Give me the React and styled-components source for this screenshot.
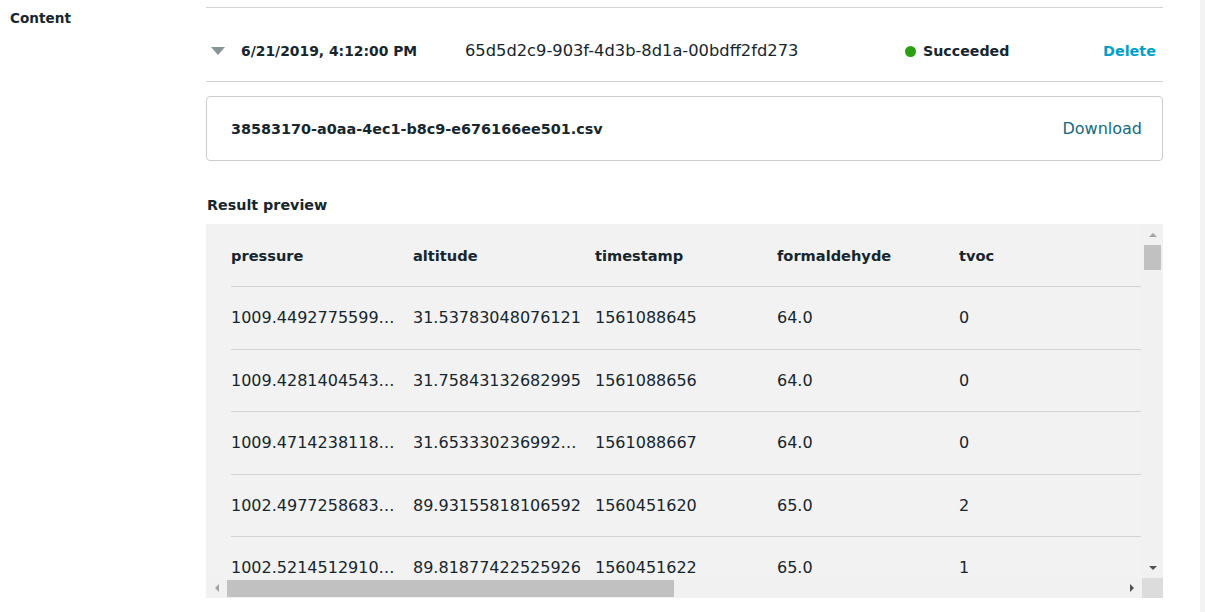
import React from 'react';
import styled, { createGlobalStyle } from 'styled-components';

//Constants we need for this page
const TEXT = '#16262e';
const LINE = '#d3d3d3';

const GlobalStyle = createGlobalStyle`
  html, body {
    margin: 0;
    padding: 0;
    background: #ffffff;
  }
  body {
    font-family: "DejaVu Sans", "Noto Sans", sans-serif;
    color: ${TEXT};
  }
`;

const Page = styled.div`
  width: 1205px;
  height: 612px;
  display: grid;
  grid-template-columns: 206px 957px 1fr 5px;
  overflow: hidden;
`;

const SideLabel = styled.div`
  padding: 9px 0 0 10px;
  font-size: 13.6px;
  font-weight: bold;
  line-height: 18px;
`;

const Main = styled.div`
  padding-top: 7px;
  display: flex;
  flex-direction: column;
`;

const PageEdge = styled.div`
  background: #f3f3f3;
`;

const JobRow = styled.div`
  display: grid;
  grid-template-columns: 35px 224px 440px 1fr auto;
  align-items: center;
  padding: 33px 7px 20px 0;
  border-top: 1px solid ${LINE};
  border-bottom: 1px solid ${LINE};
  line-height: 20px;
`;

const Caret = styled.span`
  width: 0;
  height: 0;
  margin-left: 5px;
  border-left: 7px solid transparent;
  border-right: 7px solid transparent;
  border-top: 8px solid #879596;
`;

const DateText = styled.span`
  font-size: 13.9px;
  font-weight: bold;
`;

const IdText = styled.span`
  font-size: 16.3px;
`;

const Status = styled.span`
  display: flex;
  align-items: center;
  gap: 7px;
  font-size: 14.2px;
  font-weight: bold;
`;

const Dot = styled.span`
  width: 11px;
  height: 11px;
  border-radius: 50%;
  background: #2a9f12;
`;

const DeleteLink = styled.a`
  font-size: 14.4px;
  font-weight: bold;
  color: #00a1c9;
  cursor: pointer;
`;

const FileCard = styled.div`
  box-sizing: border-box;
  height: 65px;
  margin-top: 14px;
  padding: 0 20px 0 24px;
  display: flex;
  align-items: center;
  justify-content: space-between;
  border: 1px solid #cccccc;
  border-radius: 4px;
`;

const FileName = styled.span`
  font-size: 14.4px;
  font-weight: bold;
`;

const DownloadLink = styled.a`
  font-size: 16px;
  color: #146a80;
  cursor: pointer;
`;

const SectionTitle = styled.h3`
  margin: 34px 0 9px 1px;
  font-size: 14.3px;
  font-weight: bold;
  line-height: 20px;
`;

const Preview = styled.div`
  height: 374px;
  display: grid;
  grid-template-columns: 1fr 21px;
  grid-template-rows: 1fr 20px;
  background: #f2f2f2;
`;

const Viewport = styled.div`
  overflow: hidden;
  min-width: 0;
  padding-left: 25px;
  margin-right: 1px;
`;

const Table = styled.table`
  border-collapse: collapse;
  table-layout: fixed;
  width: ${(p) => p.$width}px;
`;

const Th = styled.th`
  width: ${(p) => (p.$filler ? 'auto' : '182px')};
  height: 62px;
  padding: 0;
  text-align: left;
  font-size: 14.6px;
  font-weight: bold;
  border-bottom: 1px solid ${LINE};
`;

const Td = styled.td`
  height: 61.5px;
  padding: 0 12px 0 0;
  font-size: 16px;
  white-space: nowrap;
  overflow: hidden;
  text-overflow: ellipsis;
  border-bottom: 1px solid ${LINE};
`;

const VScroll = styled.div`
  display: flex;
  flex-direction: column;
  align-items: center;
  background: #f1f1f1;
`;

const HScroll = styled.div`
  display: flex;
  align-items: center;
  background: #f1f1f1;
`;

const ArrowBox = styled.div`
  flex: none;
  width: 21px;
  height: 21px;
  display: flex;
  align-items: center;
  justify-content: center;
`;

const Arrow = styled.span`
  width: 0;
  height: 0;
  ${(p) => p.$dir === 'up' && `
    border-left: 4px solid transparent;
    border-right: 4px solid transparent;
    border-bottom: 4px solid ${p.$color};
  `}
  ${(p) => p.$dir === 'down' && `
    border-left: 4px solid transparent;
    border-right: 4px solid transparent;
    border-top: 4px solid ${p.$color};
  `}
  ${(p) => p.$dir === 'left' && `
    border-top: 4px solid transparent;
    border-bottom: 4px solid transparent;
    border-right: 4px solid ${p.$color};
  `}
  ${(p) => p.$dir === 'right' && `
    border-top: 4px solid transparent;
    border-bottom: 4px solid transparent;
    border-left: 4px solid ${p.$color};
  `}
`;

const Track = styled.div`
  flex: 1;
  align-self: stretch;
  display: flex;
  flex-direction: ${(p) => (p.$vertical ? 'column' : 'row')};
  align-items: center;
`;

const Thumb = styled.div`
  background: #c1c1c1;
  width: ${(p) => p.$w};
  height: ${(p) => p.$h};
`;

const Corner = styled.div`
  background: #dcdcdc;
`;

const columns = ['pressure', 'altitude', 'timestamp', 'formaldehyde', 'tvoc'];

const rows = [
    ['1009.44927755993652', '31.53783048076121', '1561088645', '64.0', '0'],
    ['1009.42814045431152', '31.75843132682995', '1561088656', '64.0', '0'],
    ['1009.47142381185241', '31.653330236992117', '1561088667', '64.0', '0'],
    ['1002.49772586834131', '89.93155818106592', '1560451620', '65.0', '2'],
    ['1002.52145129104726', '89.81877422525926', '1560451622', '65.0', '1'],
];

const App = () => {
    return (
        <Page>
            <GlobalStyle />
            <SideLabel>Content</SideLabel>
            <Main>
                <JobRow>
                    <Caret />
                    <DateText>6/21/2019, 4:12:00 PM</DateText>
                    <IdText>65d5d2c9-903f-4d3b-8d1a-00bdff2fd273</IdText>
                    <Status><Dot />Succeeded</Status>
                    <DeleteLink>Delete</DeleteLink>
                </JobRow>
                <FileCard>
                    <FileName>38583170-a0aa-4ec1-b8c9-e676166ee501.csv</FileName>
                    <DownloadLink>Download</DownloadLink>
                </FileCard>
                <SectionTitle>Result preview</SectionTitle>
                <Preview>
                    <Viewport>
                        <Table $width={1820}>
                            <thead>
                                <tr>
                                    {columns.map((c) => <Th key={c}>{c}</Th>)}
                                    <Th $filler />
                                </tr>
                            </thead>
                            <tbody>
                                {rows.map((r, i) => (
                                    <tr key={i}>
                                        {r.map((v, j) => <Td key={j}>{v}</Td>)}
                                        <Td />
                                    </tr>
                                ))}
                            </tbody>
                        </Table>
                    </Viewport>
                    <VScroll>
                        <ArrowBox><Arrow $dir="up" $color="#a3a3a3" /></ArrowBox>
                        <Track $vertical>
                            <Thumb $w="17px" $h="25px" />
                        </Track>
                        <ArrowBox><Arrow $dir="down" $color="#505050" /></ArrowBox>
                    </VScroll>
                    <HScroll>
                        <ArrowBox><Arrow $dir="left" $color="#a3a3a3" /></ArrowBox>
                        <Track>
                            <Thumb $w="447px" $h="17px" />
                        </Track>
                        <ArrowBox><Arrow $dir="right" $color="#505050" /></ArrowBox>
                    </HScroll>
                    <Corner />
                </Preview>
            </Main>
            <div />
            <PageEdge />
        </Page>
    );
};

export default App;
